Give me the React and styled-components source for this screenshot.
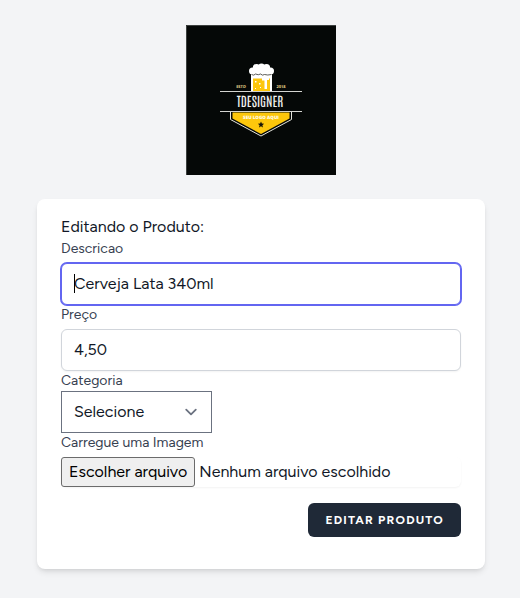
import React, { useState } from "react";
import styled, { createGlobalStyle, css } from "styled-components";

const GlobalStyle = createGlobalStyle`
  *, *::before, *::after { box-sizing: border-box; }
  body {
    margin: 0;
    background: #f3f4f6;
    color: #111827;
    font-family: Figtree, Lato, sans-serif;
    font-size: 16px;
    line-height: 24px;
  }
`;

const Page = styled.main`
  min-height: 100vh;
  display: flex;
  flex-direction: column;
  align-items: center;
  gap: 24px;
  padding: 25px 0 24px 2px;
`;

const LogoLink = styled.a`
  display: block;
  svg { display: block; }
`;

const Card = styled.form`
  width: 100%;
  max-width: 448px;
  padding: 16px 24px 32px;
  background: #fff;
  border-radius: 8px;
  box-shadow: 0 4px 6px -1px rgba(0, 0, 0, 0.1), 0 2px 4px -2px rgba(0, 0, 0, 0.1);
`;

const Title = styled.h1`
  margin: 0;
  font-size: 16px;
  font-weight: 400;
  line-height: 24px;
`;

const Label = styled.label`
  display: block;
  color: #374151;
  font-size: 14px;
  line-height: 20px;
`;

const control = css`
  height: 42px;
  background-color: #fff;
  color: #111827;
  font: inherit;
`;

const InputWrap = styled.div`
  position: relative;
  margin-top: 4px;
`;

const Caret = styled.span`
  position: absolute;
  left: 13px;
  top: 11px;
  width: 1px;
  height: 19px;
  background: #000;
`;

const TextInput = styled.input`
  ${control}
  display: block;
  width: 100%;
  padding: 7px 12px 9px;
  border: 1px solid #d1d5db;
  border-radius: 6px;
  box-shadow: 0 1px 2px rgba(0, 0, 0, 0.05);
  &:focus {
    outline: none;
    border-color: #6366f1;
    box-shadow: 0 0 0 1px #6366f1;
  }
`;

const SelectWrap = styled.div`
  position: relative;
  width: 151px;
  svg {
    position: absolute;
    right: 9px;
    top: 9px;
    pointer-events: none;
  }
`;

const Select = styled.select`
  ${control}
  display: block;
  width: 100%;
  padding: 8px 12px;
  appearance: none;
  border: 1px solid #6b7280;
  border-radius: 0;
`;

const FileRow = styled.div`
  position: relative;
  display: flex;
  align-items: center;
  gap: 4px;
  height: 30px;
  margin-top: 4px;
  border-radius: 6px;
  box-shadow: 0 1px 2px rgba(0, 0, 0, 0.05);
`;

const FileInput = styled.input`
  position: absolute;
  inset: 0;
  width: 100%;
  opacity: 0;
`;

const FileButton = styled.span`
  height: 30px;
  padding: 2px 7px;
  border: 1px solid #6b6b6b;
  border-radius: 3px;
  background: #efefef;
  color: #000;
`;

const Actions = styled.div`
  display: flex;
  justify-content: flex-end;
  margin-top: 16px;
`;

const SubmitButton = styled.button`
  padding: 8px 16px;
  border: 1px solid transparent;
  border-radius: 6px;
  background: #1f2937;
  color: #fff;
  font: inherit;
  font-size: 12px;
  font-weight: 700;
  line-height: 16px;
  letter-spacing: 0.1em;
  text-transform: uppercase;
`;

function Logo() {
  return (
    <svg width="150" height="150" viewBox="0 0 150 150" role="img" aria-label="TDesigner">
      <rect width="150" height="150" fill="#050807" />
      <path d="M.5 150V.5H150" fill="none" stroke="#3c403f" />
      <rect x="65" y="49" width="21" height="17" fill="#fff" />
      <path d="M67 53.500h17V66H67z" fill="#fdc70c" />
      <path d="M76 53h7v2h-2v9h-2.500v-8.500H76z" fill="#fff" />
      <g fill="#fff">
        <circle cx="66.500" cy="46" r="3.500" />
        <circle cx="70.500" cy="42.500" r="3.600" />
        <circle cx="75.500" cy="42" r="3.600" />
        <circle cx="80.500" cy="42.500" r="3.600" />
        <circle cx="84.500" cy="46" r="3.500" />
        <rect x="66" y="43" width="19" height="6" />
        <path d="M69 56h1.500v1.500H69zM73 58h1.500v1.500H73zM74 62h1v1h-1zM69 63h1v1h-1z" />
      </g>
      <path d="M65.500 49.500q2.500 1.500 4-.5 3 1.500 5 0 2 2 4 .5 3 1 7 0" fill="none" stroke="#33342f" strokeWidth=".8" />
      <path d="M34 66.500h82M34 86.500h82" stroke="#d4d5d1" />
      <path d="M44.500 87v7.500L75 111l30.500-16.500V87" fill="none" stroke="#e5e5dc" />
      <path d="M46.500 87.500h57V93.500L75 109 46.500 93.500z" fill="#fdc70c" />
      <text x="74" y="82" textAnchor="middle" fill="#f0f0ed" fontFamily="Antonio, 'Bebas Neue', sans-serif" fontSize="13" textRendering="geometricPrecision">TDESIGNER</text>
      <g fontFamily="'Open Sans', sans-serif" fontWeight="700" textAnchor="middle" textRendering="geometricPrecision">
        <text x="55" y="63" fontSize="4" fill="#e4d28a">ESTD</text>
        <text x="95" y="63" fontSize="4" fill="#e4d28a">2018</text>
        <text x="75" y="94" fontSize="4.5" fontWeight="800" fill="#fffbe8">SEU LOGO AQUI</text>
      </g>
      <path d="M75 96.500l.9 2.100 2.200.2-1.700 1.400.6 2.200-2-1.200-2 1.200.6-2.200-1.700-1.400 2.200-.2z" fill="#171408" />
    </svg>
  );
}

export default function App() {
  const [untouched, setUntouched] = useState(true);
  const [fileName, setFileName] = useState("Nenhum arquivo escolhido");
  const touch = () => setUntouched(false);

  return (
    <>
      <GlobalStyle />
      <Page>
        <LogoLink href="/"><Logo /></LogoLink>
        <Card onSubmit={(e) => e.preventDefault()}>
          <Title>Editando o Produto:</Title>
          <Label htmlFor="descricao">Descricao</Label>
          <InputWrap>
            <TextInput
              id="descricao"
              type="text"
              defaultValue="Cerveja Lata 340ml"
              autoFocus
              onKeyDown={touch}
              onPointerDown={touch}
              onBlur={touch}
            />
            {untouched && <Caret aria-hidden="true" />}
          </InputWrap>
          <Label htmlFor="preco">Preço</Label>
          <InputWrap>
            <TextInput id="preco" type="text" defaultValue="4,50" />
          </InputWrap>
          <Label htmlFor="categoria">Categoria</Label>
          <SelectWrap>
            <Select id="categoria">
              <option>Selecione</option>
            </Select>
            <svg width="24" height="24" viewBox="0 0 20 20" fill="none" stroke="#6b7280" strokeWidth="1.5" strokeLinecap="round" strokeLinejoin="round" aria-hidden="true">
              <path d="M6 8l4 4 4-4" />
            </svg>
          </SelectWrap>
          <Label htmlFor="imagem">Carregue uma Imagem</Label>
          <FileRow>
            <FileButton aria-hidden="true">Escolher arquivo</FileButton>
            <span>{fileName}</span>
            <FileInput
              id="imagem"
              type="file"
              onChange={(e) => setFileName(e.target.files[0]?.name ?? "Nenhum arquivo escolhido")}
            />
          </FileRow>
          <Actions>
            <SubmitButton type="submit">Editar Produto</SubmitButton>
          </Actions>
        </Card>
      </Page>
    </>
  );
}
